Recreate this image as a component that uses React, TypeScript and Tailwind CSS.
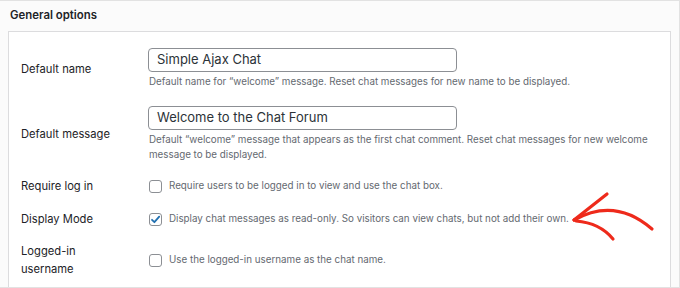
import React from "react";

const font = { fontFamily: "Inter, 'Liberation Sans', sans-serif" };

function Checkbox({ checked }: { checked?: boolean }) {
  return (
    <span className="relative inline-block w-[13px] h-[13px] shrink-0 rounded-[3px] border border-[#8c8f94] bg-white">
      {checked && (
        <svg viewBox="0 0 13 13" className="absolute left-[-1px] top-[-1px] w-[13px] h-[13px]">
          <path d="M3 6.8 L5.4 9.2 L10.2 3.6" fill="none" stroke="#2271b1" strokeWidth="1.8" strokeLinecap="round" strokeLinejoin="round" />
        </svg>
      )}
    </span>
  );
}

function Label({ children }: { children: React.ReactNode }) {
  return <div className="w-[139px] shrink-0 pl-[12px] text-[11.2px] leading-[18px] text-[#1d2327]">{children}</div>;
}

function CheckRow({ label, text, checked, className }: { label: React.ReactNode; text: string; checked?: boolean; className?: string }) {
  return (
    <div className={"flex items-center " + (className || "")}>
      <Label>{label}</Label>
      <div className="flex items-center gap-[7px] pl-[1px]">
        <Checkbox checked={checked} />
        <span className="text-[9.8px] leading-[18px] text-[#646970]">{text}</span>
      </div>
    </div>
  );
}

export default function App() {
  return (
    <div style={font} className="w-[680px] h-[288px] overflow-hidden bg-[#fbfbfb] border-t border-r border-b border-[#e2e2e2] relative">
      <div className="h-[30px] pl-[10px] flex items-center text-[11.4px] font-semibold text-[#1d2327]">General options</div>
      <div className="ml-[8px] w-[663px] h-[260px] bg-white border border-[#dcdcde]">
        <div className="flex items-center pt-[16px]">
          <Label>Default name</Label>
          <div>
            <div className="w-[309px] h-[24px] rounded-[4px] border border-[#8c8f94] bg-white flex items-center pl-[8px] text-[13px] text-[#2c3338]">
              Simple Ajax Chat
            </div>
            <div className="mt-[2px] pl-[1px] text-[9.8px] leading-[15px] text-[#646970]">
              Default name for “welcome” message. Reset chat messages for new name to be displayed.
            </div>
          </div>
        </div>
        <div className="flex items-center mt-[17px]">
          <Label>Default message</Label>
          <div>
            <div className="w-[309px] h-[24px] rounded-[4px] border border-[#8c8f94] bg-white flex items-center pl-[8px] text-[13px] text-[#2c3338]">
              Welcome to the Chat Forum
            </div>
            <div className="mt-[2px] pl-[1px] w-[510px] text-[9.8px] leading-[15px] text-[#646970]">
              Default “welcome” message that appears as the first chat comment. Reset chat messages for new welcome message to be displayed.
            </div>
          </div>
        </div>
        <CheckRow className="mt-[15px]" label="Require log in" text="Require users to be logged in to view and use the chat box." />
        <CheckRow className="mt-[15px]" label="Display Mode" checked text="Display chat messages as read-only. So visitors can view chats, but not add their own." />
        <CheckRow className="mt-[14px]" label={<>Logged-in<br />username</>} text="Use the logged-in username as the chat name." />
      </div>
      <svg className="absolute left-0 top-0" width="680" height="288" viewBox="0 0 680 288">
        <path d="M574 219 Q 615 196 652 228" fill="none" stroke="#ee2a1b" strokeWidth="3.2" strokeLinecap="round" />
        <path d="M574 219 L607 193" fill="none" stroke="#ee2a1b" strokeWidth="3.2" strokeLinecap="round" />
        <path d="M576 220 Q 600 222 613 238" fill="none" stroke="#ee2a1b" strokeWidth="3.2" strokeLinecap="round" />
      </svg>
    </div>
  );
}
